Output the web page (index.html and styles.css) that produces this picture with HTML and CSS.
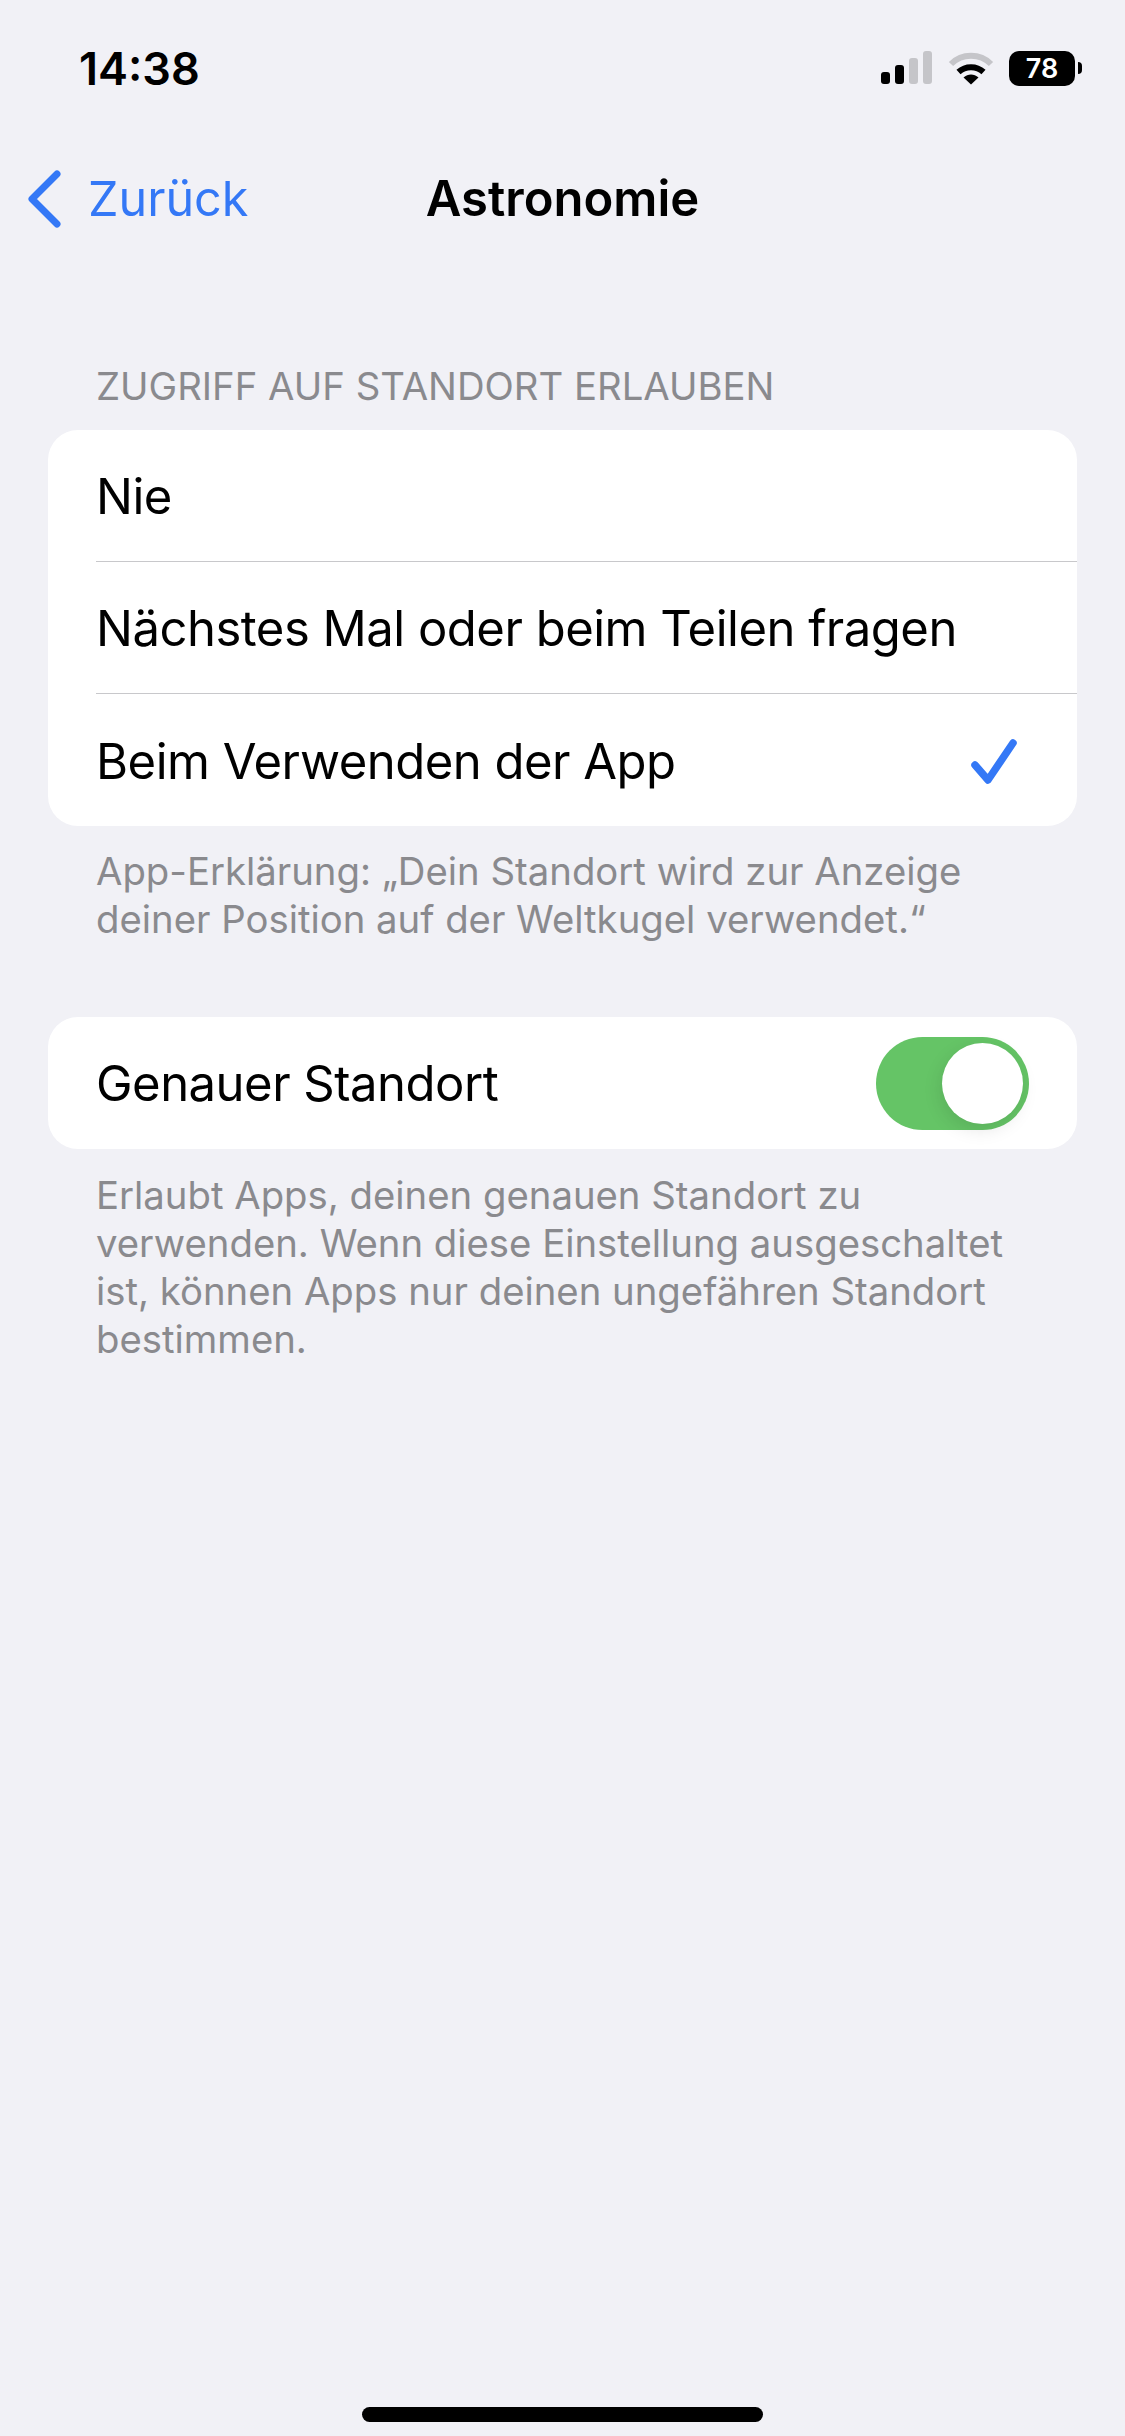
FILE: index.html
```html
<!DOCTYPE html>
<html lang="de">
<head>
    <meta charset="UTF-8">
    <title>Astronomie</title>
    <link rel="stylesheet" href="styles.css">
</head>
<body>
    <div class="screen">
        <div class="status-bar">
            <span class="time">14:38</span>
            <div class="status-icons">
                <svg class="signal" width="52" height="34" viewBox="0 0 52 34">
                    <rect x="0" y="21" width="9" height="12" rx="3" fill="#000"/>
                    <rect x="14" y="14" width="9" height="19" rx="3" fill="#000"/>
                    <rect x="28" y="7" width="9" height="26" rx="3" fill="#c5c5c9"/>
                    <rect x="42" y="0" width="9" height="33" rx="3" fill="#c5c5c9"/>
                </svg>
                <svg class="wifi" width="46" height="34" viewBox="0 0 46 34">
                    <path d="M3 13C14 2 32 2 43 13" fill="none" stroke="#c5c5c9" stroke-width="6"/>
                    <path d="M10.5 21C17.5 14.5 28.5 14.5 35.5 21" fill="none" stroke="#000" stroke-width="6"/>
                    <path d="M15.5 26.5C20 22.5 26 22.5 30.5 26.5L23 33.5Z" fill="#000"/>
                </svg>
                <div class="battery">
                    <span class="battery-body">78</span>
                    <span class="battery-tip"></span>
                </div>
            </div>
        </div>

        <div class="nav-bar">
            <div class="back">
                <svg width="36" height="58" viewBox="0 0 36 58">
                    <path d="M31 4L6 29L31 54" fill="none" stroke="#3478f6" stroke-width="7" stroke-linecap="round" stroke-linejoin="round"/>
                </svg>
                <span>Zurück</span>
            </div>
            <h1>Astronomie</h1>
        </div>

        <div class="section-title">ZUGRIFF AUF STANDORT ERLAUBEN</div>
        <div class="card">
            <div class="row"><span>Nie</span></div>
            <div class="row"><span>Nächstes Mal oder beim Teilen fragen</span></div>
            <div class="row">
                <span>Beim Verwenden der App</span>
                <svg class="check" width="48" height="48" viewBox="0 0 48 48">
                    <path d="M4 28L17 43L42 6" fill="none" stroke="#3478f6" stroke-width="7.5" stroke-linecap="round" stroke-linejoin="round"/>
                </svg>
            </div>
        </div>
        <p class="note">App-Erklärung: „Dein Standort wird zur Anzeige<br>deiner Position auf der Weltkugel verwendet.“</p>

        <div class="card card-second">
            <div class="row">
                <span>Genauer Standort</span>
                <div class="toggle"><div class="knob"></div></div>
            </div>
        </div>
        <p class="note">Erlaubt Apps, deinen genauen Standort zu<br>verwenden. Wenn diese Einstellung ausgeschaltet<br>ist, können Apps nur deinen ungefähren Standort<br>bestimmen.</p>

        <div class="home-indicator"></div>
    </div>
</body>
</html>
```

FILE: styles.css
```css
* {
    box-sizing: border-box;
}

html, body {
    margin: 0;
    padding: 0;
}

body {
    background: #f1f1f6;
    font-family: Inter, "Liberation Sans", sans-serif;
    color: #000;
}

.screen {
    position: relative;
    width: 1125px;
    height: 2436px;
    overflow: hidden;
}

.status-bar {
    display: flex;
    justify-content: space-between;
    align-items: center;
    height: 102px;
    padding: 34px 43px 0 79px;
}

.time {
    font-size: 45px;
    font-weight: 600;
}

.status-icons {
    display: flex;
    align-items: center;
    gap: 15px;
}

.battery {
    display: flex;
    align-items: center;
    gap: 3px;
}

.battery-body {
    width: 66px;
    height: 35px;
    background: #000;
    color: #fff;
    border-radius: 10px;
    font-size: 27px;
    font-weight: 600;
    line-height: 35px;
    text-align: center;
}

.battery-tip {
    width: 4px;
    height: 12px;
    background: #000;
    border-radius: 0 6px 6px 0;
}

.nav-bar {
    position: relative;
    display: flex;
    justify-content: center;
    align-items: center;
    height: 58px;
    margin-top: 67px;
}

.back {
    position: absolute;
    left: 26px;
    top: 0;
    display: flex;
    align-items: center;
    gap: 26px;
    color: #3478f6;
    font-size: 48.5px;
}

h1 {
    margin: 0;
    font-size: 49px;
    font-weight: 600;
}

.section-title {
    margin-top: 137px;
    padding-left: 96px;
    font-size: 38.3px;
    line-height: 44px;
    color: #8a8a8e;
}

.card {
    margin: 22px 48px 0;
    background: #fff;
    border-radius: 30px;
}

.row {
    display: flex;
    justify-content: space-between;
    align-items: center;
    height: 132px;
    margin-left: 48px;
    padding: 2px 48px 0 0;
    font-size: 49px;
    letter-spacing: -0.5px;
    border-bottom: 1.5px solid #c8c8cb;
}

.row:last-child {
    border-bottom: none;
}

.check {
    margin-right: 10px;
}

.note {
    margin: 21px 0 0;
    padding-left: 96px;
    font-size: 38.3px;
    line-height: 48px;
    color: #8a8a8e;
}

.card-second {
    margin-top: 74px;
}

.card-second .row {
    padding-top: 0;
}

.card-second + .note {
    margin-top: 22px;
}

.toggle {
    width: 153px;
    height: 93px;
    padding: 6px;
    display: flex;
    justify-content: flex-end;
    background: #65c466;
    border-radius: 47px;
}

.knob {
    width: 81px;
    height: 81px;
    background: #fff;
    border-radius: 50%;
    box-shadow: -2px 6px 18px rgba(0, 0, 0, 0.1);
}

.home-indicator {
    position: absolute;
    left: 362px;
    bottom: 14px;
    width: 401px;
    height: 15px;
    background: #000;
    border-radius: 8px;
}
```
